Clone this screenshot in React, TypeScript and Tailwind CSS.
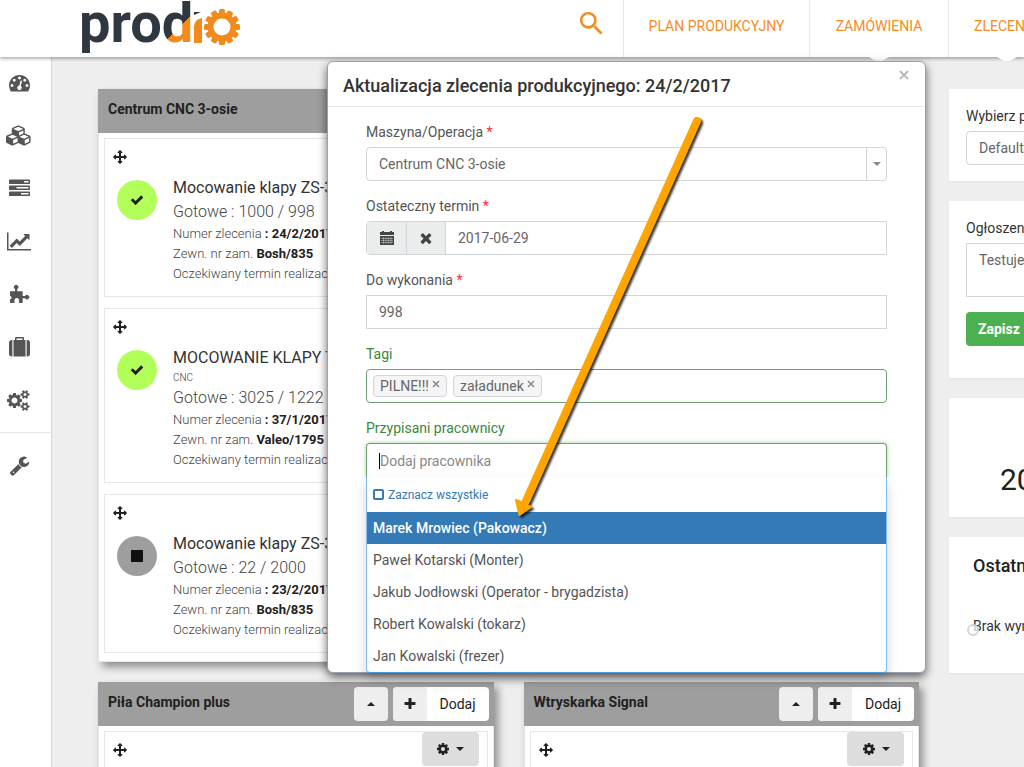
import React from "react";
import { MdSearch } from "react-icons/md";

type IconProps = { d: string; className?: string; viewBox?: string };

const Icon = ({ d, className, viewBox = "0 0 1792 1792" }: IconProps) => (
  <svg viewBox={viewBox} className={className} fill="currentColor" aria-hidden="true">
    <path d={d} />
  </svg>
);

const icons = {
  dashboard:
    "M384 1152q0-53-37.5-90.5t-90.5-37.5-90.5 37.5-37.5 90.5 37.5 90.5 90.5 37.5 90.5-37.5 37.5-90.5zm192-448q0-53-37.5-90.5t-90.5-37.5-90.5 37.5-37.5 90.5 37.5 90.5 90.5 37.5 90.5-37.5 37.5-90.5zm428 481l101-382q6-26-7.5-48.5t-38.5-29.5-48 6.5-30 39.5l-101 382q-60 5-107 43.5t-63 98.5q-20 77 20 146t117 89 146-20 89-117q16-60-6-117t-72-91zm660-33q0-53-37.5-90.5t-90.5-37.5-90.5 37.5-37.5 90.5 37.5 90.5 90.5 37.5 90.5-37.5 37.5-90.5zm-640-640q0-53-37.5-90.5t-90.5-37.5-90.5 37.5-37.5 90.5 37.5 90.5 90.5 37.5 90.5-37.5 37.5-90.5zm448 192q0-53-37.5-90.5t-90.5-37.5-90.5 37.5-37.5 90.5 37.5 90.5 90.5 37.5 90.5-37.5 37.5-90.5zm320 448q0 261-141 483-19 29-54 29h-1402q-35 0-54-29-141-221-141-483 0-182 71-348t191-286 286-191 348-71 348 71 286 191 191 286 71 348z",
  cubes:
    "M640 1632l384-192v-314l-384 164v342zm-64-454l404-173-404-173-404 173zm1088 454l384-192v-314l-384 164v342zm-64-454l404-173-404-173-404 173zm-448-293l384-165v-266l-384 164v267zm-64-379l441-189-441-189-441 189zm1088 518v416q0 36-19 67t-52 47l-448 224q-25 14-57 14t-57-14l-448-224q-4-2-7-4-2 2-7 4l-448 224q-25 14-57 14t-57-14l-448-224q-33-16-52-47t-19-67v-416q0-38 21.5-70t56.5-48l434-186v-400q0-38 21.5-70t56.5-48l448-192q23-10 50-10t50 10l448 192q35 16 56.5 48t21.5 70v400l434 186q36 16 57 48t21 70z",
  tasks:
    "M1024 1408h640v-128h-640v128zm-384-512h1024v-128h-1024v128zm640-512h384v-128h-384v128zm512 832v256q0 26-19 45t-45 19h-1664q-26 0-45-19t-19-45v-256q0-26 19-45t45-19h1664q26 0 45 19t19 45zm0-512v256q0 26-19 45t-45 19h-1664q-26 0-45-19t-19-45v-256q0-26 19-45t45-19h1664q26 0 45 19t19 45zm0-512v256q0 26-19 45t-45 19h-1664q-26 0-45-19t-19-45v-256q0-26 19-45t45-19h1664q26 0 45 19t19 45z",
  chart:
    "M2048 1536v128h-2048v-1536h128v1408h1920zm-128-1248v435q0 21-19.5 29.5t-35.5-7.5l-121-121-633 633q-10 10-23 10t-23-10l-233-233-416 416-192-192 585-585q10-10 23-10t23 10l233 233 464-464-121-121q-16-16-7.5-35.5t29.5-19.5h435q14 0 23 9t9 23z",
  puzzle:
    "M1 7h4.800v-2.200a2.100 2.100 0 1 1 2 0v2.200h5.200v4.500h2.300a2.100 2.100 0 1 1 0 2h-2.300v4.500h-3.400v-2.500a2.200 2.200 0 0 0-4.400 0v2.500h-4.200v-3.500a1.500 1.500 0 0 0 0-3z",
  suitcase:
    "M640 256h512v-128h-512v128zm-352 0v1408h-64q-92 0-158-66t-66-158v-960q0-92 66-158t158-66h64zm1120 0v1408h-1024v-1408h128v-160q0-40 28-68t68-28h576q40 0 68 28t28 68v160h128zm384 224v960q0 92-66 158t-158 66h-64v-1408h64q92 0 158 66t66 158z",
  cogs: "M832 896q0-106-75-181t-181-75-181 75-75 181 75 181 181 75 181-75 75-181zm768 512q0-52-38-90t-90-38-90 38-38 90q0 53 37.5 90.5t90.5 37.5 90.5-37.5 37.5-90.5zm0-1024q0-52-38-90t-90-38-90 38-38 90q0 53 37.5 90.5t90.5 37.5 90.5-37.5 37.5-90.5zm-384 421v185q0 10-7 19.5t-16 10.5l-155 24q-11 35-32 76 34 48 90 115 7 11 7 20 0 12-7 19-23 30-82.5 89.500t-78.500 59.500q-11 0-21-7l-115-90q-37 19-77 31-11 108-23 155-7 24-30 24h-186q-11 0-20-7.500t-10-17.500l-23-153q-34-10-75-31l-118 89q-7 7-20 7-11 0-21-8-144-133-144-160 0-9 7-19 10-14 41-53t47-61q-23-44-35-82l-152-24q-10-1-17-9.500t-7-19.500v-185q0-10 7-19.500t16-10.500l155-24q11-35 32-76-34-48-90-115-7-11-7-20 0-12 7-20 22-30 82-89t79-59q11 0 21 7l115 90q34-18 77-32 11-108 23-154 7-24 30-24h186q11 0 20 7.500t10 17.500l23 153q34 10 75 31l118-89q8-7 20-7 11 0 21 8 144 133 144 160 0 8-7 19-12 16-42 54t-45 60q23 48 34 82l152 23q10 2 17 10.500t7 19.500zm640 533v140q0 16-149 31-12 27-30 52 51 113 51 138 0 4-4 7-122 71-124 71-8 0-46-47t-52-68q-20 2-30 2t-30-2q-14 21-52 68t-46 47q-2 0-124-71-4-3-4-7 0-25 51-138-18-25-30-52-149-15-149-31v-140q0-16 149-31 13-29 30-52-51-113-51-138 0-4 4-7 4-2 35-20t59-34 30-16q8 0 46 46.500t52 67.500q20-2 30-2t30 2q51-71 92-112l6-2q4 0 124 70 4 3 4 7 0 25-51 138 17 23 30 52 149 15 149 31zm0-1024v140q0 16-149 31-12 27-30 52 51 113 51 138 0 4-4 7-122 71-124 71-8 0-46-47t-52-68q-20 2-30 2t-30-2q-14 21-52 68t-46 47q-2 0-124-71-4-3-4-7 0-25 51-138-18-25-30-52-149-15-149-31v-140q0-16 149-31 13-29 30-52-51-113-51-138 0-4 4-7 4-2 35-20t59-34 30-16q8 0 46 46.500t52 67.500q20-2 30-2t30 2q51-71 92-112l6-2q4 0 124 70 4 3 4 7 0 25-51 138 17 23 30 52 149 15 149 31z",
  wrench:
    "M448 1472q0-26-19-45t-45-19-45 19-19 45 19 45 45 19 45-19 19-45zm644-420l-682 682q-37 37-90 37-52 0-91-37l-106-108q-38-36-38-90 0-53 38-91l681-681q39 98 114.500 173.500t173.500 114.500zm634-435q0 39-23 106-47 134-164.500 217.500t-258.500 83.500q-185 0-316.500-131.500t-131.500-316.500 131.500-316.500 316.500-131.500q58 0 121.500 16.500t107.500 46.500q16 11 16 28t-16 28l-293 169v224l193 107q5-3 79-48.500t135.500-81 70.500-35.500q15 0 23.500 10t8.500 25z",
  arrows:
    "M1792 896q0 26-19 45l-256 256q-19 19-45 19t-45-19-19-45v-128h-384v384h128q26 0 45 19t19 45-19 45l-256 256q-19 19-45 19t-45-19l-256-256q-19-19-19-45t19-45 45-19h128v-384h-384v128q0 26-19 45t-45 19-45-19l-256-256q-19-19-19-45t19-45l256-256q19-19 45-19t45 19 19 45v128h384v-384h-128q-26 0-45-19t-19-45 19-45l256-256q19-19 45-19t45 19l256 256q19 19 19 45t-19 45-45 19h-128v384h384v-128q0-26 19-45t45-19 45 19l256 256q19 19 19 45z",
  check:
    "M1671 566q0 40-28 68l-724 724-136 136q-28 28-68 28t-68-28l-136-136-362-362q-28-28-28-68t28-68l136-136q28-28 68-28t68 28l294 295 656-657q28-28 68-28t68 28l136 136q28 28 28 68z",
  times:
    "M1490 1322q0 40-28 68l-136 136q-28 28-68 28t-68-28l-294-294-294 294q-28 28-68 28t-68-28l-136-136q-28-28-28-68t28-68l294-294-294-294q-28-28-28-68t28-68l136-136q28-28 68-28t68 28l294 294 294-294q28-28 68-28t68 28l136 136q28 28 28 68t-28 68l-294 294 294 294q28 28 28 68z",
  plus: "M1600 736v192q0 40-28 68t-68 28h-416v416q0 40-28 68t-68 28h-192q-40 0-68-28t-28-68v-416h-416q-40 0-68-28t-28-68v-192q0-40 28-68t68-28h416v-416q0-40 28-68t68-28h192q40 0 68 28t28 68v416h416q40 0 68 28t28 68z",
  cog: "M1152 896q0-106-75-181t-181-75-181 75-75 181 75 181 181 75 181-75 75-181zm512-109v222q0 12-8 23t-20 13l-185 28q-19 54-39 91 35 50 107 138 10 12 10 25t-9 23q-27 37-99 108t-94 71q-12 0-26-9l-138-108q-44 23-91 38-16 136-29 186-7 28-36 28h-222q-14 0-24.500-8.500t-11.500-21.500l-28-184q-49-16-90-37l-141 107q-10 9-25 9-14 0-25-11-126-114-165-168-7-10-7-23 0-12 8-23 15-21 51-66.500t54-70.500q-27-50-41-99l-183-27q-13-2-21-12.500t-8-23.500v-222q0-12 8-23t19-13l186-28q14-46 39-92-40-57-107-138-10-12-10-24 0-10 9-23 26-36 98.500-107.500t94.500-71.500q13 0 26 10l138 107q44-23 91-38 16-136 29-186 7-28 36-28h222q14 0 24.500 8.500t11.500 21.500l28 184q49 16 90 37l142-107q9-9 24-9 13 0 25 10 129 119 165 170 7 8 7 22 0 12-8 23-15 21-51 66.500t-54 70.500q26 50 41 98l183 28q13 2 21 12.500t8 23.500z",
  caretDown: "M0 0h8l-4 4z",
  caretUp: "M0 4h8l-4-4z",
};

const menu = [
  { name: "Pulpit", d: icons.dashboard, viewBox: "0 0 1792 1792", size: "h-[21px] w-[21px]" },
  { name: "Produkty", d: icons.cubes, viewBox: "0 0 2304 1792", size: "h-[21px] w-[26px]" },
  { name: "Zadania", d: icons.tasks, viewBox: "0 0 1792 1792", size: "h-[21px] w-[21px]" },
  { name: "Raporty", d: icons.chart, viewBox: "0 0 2048 1792", size: "h-[21px] w-[24px]" },
  { name: "Moduły", d: icons.puzzle, viewBox: "0 0 20 20", size: "h-[21px] w-[21px]" },
  { name: "Magazyn", d: icons.suitcase, viewBox: "0 0 1792 1792", size: "h-[21px] w-[21px]" },
  { name: "Ustawienia", d: icons.cogs, viewBox: "0 0 1920 1792", size: "h-[21px] w-[24px]" },
];

const orders = [
  { title: "Mocowanie klapy ZS-345", sub: "", done: "1000 / 998", number: "24/2/2017", ext: "Bosh/835", ready: true },
  { title: "MOCOWANIE KLAPY TYLNEJ", sub: "CNC", done: "3025 / 1222", number: "37/1/2017", ext: "Valeo/1795", ready: true },
  { title: "Mocowanie klapy ZS-345", sub: "", done: "22 / 2000", number: "23/2/2017", ext: "Bosh/835", ready: false },
];

const workers = [
  "Marek Mrowiec (Pakowacz)",
  "Paweł Kotarski (Monter)",
  "Jakub Jodłowski (Operator - brygadzista)",
  "Robert Kowalski (tokarz)",
  "Jan Kowalski (frezer)",
];

const teeth = [0, 30, 60, 90, 120, 150, 180, 210, 240, 270, 300, 330];

const Logo = () => (
  <a href="#" aria-label="prodio" className="flex items-start text-[56px] leading-[46px] font-bold text-[#2f3840]">
    <span>pro</span>
    <span className="bg-[linear-gradient(135deg,#2f3840_58%,#f28a1c_58%)] bg-clip-text text-transparent">d</span>
    <svg viewBox="0 0 48 46" className="mt-1 h-[46px] w-[48px]" aria-hidden="true">
      <path d="M1 11V8h7z" fill="#2f3840" />
      <path d="M1 39V22q1-7 8-8v25z" fill="#f28a1c" />
      <g fill="#f28a1c">
        {teeth.map((a) => (
          <rect key={a} x="26" y="5" width="6" height="7" rx="1.500" transform={`rotate(${a} 29 23)`} />
        ))}
      </g>
      <circle cx="29" cy="23" r="11.500" fill="none" stroke="#f28a1c" strokeWidth="6" />
    </svg>
  </a>
);

const Header = () => (
  <header className="relative z-10 flex h-[57px] shrink-0 justify-between bg-white shadow-[0_2px_3px_rgba(0,0,0,0.3)]">
    <div className="pl-[79px]">
      <Logo />
    </div>
    <nav className="-mr-[61px] flex shrink-0 text-sm whitespace-nowrap text-[#f68b1f]">
      <button aria-label="Szukaj" className="flex w-16 items-start justify-center pt-2">
        <MdSearch size={31} />
      </button>
      <a href="#" className="flex w-[186px] items-center justify-center border-l border-gray-200 pb-1.5">
        PLAN PRODUKCYJNY
      </a>
      <a href="#" className="relative flex w-[139px] items-center justify-center border-l border-gray-200 pb-1.5">
        ZAMÓWIENIA
        <Icon d="M0 0h20l-7 4h-6z" viewBox="0 0 20 4" className="absolute top-full h-1 w-5 text-white" />
      </a>
      <a href="#" className="relative flex w-[137px] items-center border-l border-gray-200 pb-1.5 pl-[25px]">
        ZLECENIA
        <Icon d="M0 0h20l-7 4h-6z" viewBox="0 0 20 4" className="absolute top-full left-12 h-1 w-5 text-white" />
      </a>
    </nav>
  </header>
);

const Sidebar = () => (
  <aside className="w-[52px] shrink-0 border-r border-gray-300 bg-white text-[#555]">
    <ul className="flex flex-col border-b border-gray-200 pb-1">
      {menu.map((item) => (
        <li key={item.name}>
          <a href="#" aria-label={item.name} className="flex h-[53px] w-[38px] items-center justify-center pb-0.5">
            <Icon d={item.d} viewBox={item.viewBox} className={`shrink-0 ${item.size}`} />
          </a>
        </li>
      ))}
    </ul>
    <a href="#" aria-label="Narzędzia" className="flex h-16 w-[38px] items-center justify-center">
      <Icon d={icons.wrench} className="h-[21px] w-[21px]" />
    </a>
  </aside>
);

const Panel = ({ title, actions, children }: { title: string; actions?: boolean; children: React.ReactNode }) => (
  <section className="border border-gray-200 bg-white shadow-[4px_5px_8px_rgba(0,0,0,0.4)]">
    <div className="-mx-px -mt-px flex h-11 items-center justify-between bg-[#9e9e9e] pr-[5px] pl-2.5 text-[#212121]">
      <h2 className="pb-1 text-sm font-bold">{title}</h2>
      {actions && (
        <div className="flex gap-[5px] text-sm">
          <button aria-label="Zwiń" className="flex h-[34px] w-[34px] items-center justify-center rounded-sm bg-[#eee]">
            <Icon d={icons.caretUp} viewBox="0 0 8 4" className="h-1 w-2" />
          </button>
          <button className="flex h-[34px] items-center overflow-hidden rounded-sm bg-white">
            <span className="flex h-full w-[34px] items-center justify-center bg-[#eee]">
              <Icon d={icons.plus} className="h-[14px] w-[14px]" />
            </span>
            <span className="w-[62px]">Dodaj</span>
          </button>
        </div>
      )}
    </div>
    <div className="flex flex-col gap-[11px] p-[5px] pb-2">{children}</div>
  </section>
);

const Order = ({ order }: { order: (typeof orders)[number] }) => (
  <article className="border border-gray-200 px-2 pt-[11px] pb-3 text-[#212121]">
    <Icon d={icons.arrows} className="h-[14px] w-[14px]" />
    <div className="mt-3 flex gap-4 pl-1">
      <span
        className={`mt-1 flex h-10 w-10 shrink-0 items-center justify-center rounded-full ${
          order.ready ? "bg-[#b2ff59]" : "bg-[#9e9e9e]"
        }`}
      >
        {order.ready ? <Icon d={icons.check} className="h-[14px] w-[14px]" /> : <span className="h-3 w-3 bg-[#111]" />}
      </span>
      <div className="text-[13px] leading-5 font-light whitespace-nowrap text-[#444]">
        <h3 className="text-base leading-6 font-normal text-[#333]">{order.title}</h3>
        {order.sub && <p className="text-[10px] leading-4">{order.sub}</p>}
        <p className="text-base leading-6">Gotowe : {order.done}</p>
        <p>
          Numer zlecenia <b className="font-bold text-[#212121]">: {order.number}</b>
        </p>
        <p>
          Zewn. nr zam. <b className="font-bold text-[#212121]">{order.ext}</b>
        </p>
        <p>Oczekiwany termin realizacji</p>
      </div>
    </div>
  </article>
);

const EmptyOrder = () => (
  <article className="flex h-40 items-start justify-between border border-gray-200 pr-2 pl-2 text-[#212121]">
    <Icon d={icons.arrows} className="mt-[11px] h-[14px] w-[14px]" />
    <button aria-label="Opcje" className="flex h-[34px] w-[57px] items-center justify-center gap-1.5 rounded-sm bg-[#ddd]">
      <Icon d={icons.cog} className="h-[14px] w-[14px]" />
      <Icon d={icons.caretDown} viewBox="0 0 8 4" className="h-1 w-2" />
    </button>
  </article>
);

const RightBar = () => (
  <aside className="-mr-[204px] flex w-[279px] shrink-0 flex-col gap-5 text-sm text-[#333]">
    <div className="bg-white px-[17px] pt-[17px] pb-4 shadow-xs">
      <label htmlFor="plan" className="mb-[5px] block leading-5">
        Wybierz plan
      </label>
      <select id="plan" className="h-[34px] w-full appearance-none rounded-sm border border-gray-300 px-3 text-[#666]">
        <option>Default</option>
      </select>
    </div>
    <div className="bg-white px-[17px] pt-[17px] pb-8 shadow-xs">
      <label htmlFor="note" className="mb-[5px] block leading-5">
        Ogłoszenie
      </label>
      <textarea
        id="note"
        defaultValue="Testujemy"
        className="block h-[54px] w-full resize-none border border-gray-300 px-3 py-1.5 text-[#666]"
      />
      <button className="mt-[15px] h-[34px] w-24 rounded-sm bg-[#4caf50] px-3 text-left font-bold text-white">Zapisz</button>
    </div>
    <div className="flex h-[119px] items-center bg-white pt-11 pl-[51px] text-[30px] leading-none text-[#212121] shadow-xs">
      2017
    </div>
    <div className="h-[136px] bg-white pt-[17px] pl-6 shadow-xs">
      <h2 className="text-lg leading-6 font-medium text-[#212121]">Ostatnie</h2>
      <p className="relative mt-[38px] leading-5">
        Brak wyników
        <span className="absolute top-2 -left-1.5 h-3 w-3 rounded-full border-2 border-gray-300 bg-white/70" />
      </p>
    </div>
  </aside>
);

const Label = ({ id, required, children }: { id: string; required?: boolean; children: string }) => (
  <label htmlFor={id} className={`mb-[5px] block leading-5 ${required ? "text-[#555]" : "text-[#3c863d]"}`}>
    {children} {required && <span className="text-red-500">*</span>}
  </label>
);

const Tag = ({ children }: { children: string }) => (
  <span className="flex h-[22px] items-center gap-[3px] rounded-sm border border-gray-300 bg-[#f5f5f5] px-1.5">
    {children}
    <button aria-label={`Usuń ${children}`} className="pb-1 text-[#888]">
      <svg viewBox="0 0 8 8" className="h-2 w-2" stroke="currentColor" strokeWidth="1.500">
        <path d="M1 1l6 6M7 1l-6 6" />
      </svg>
    </button>
  </span>
);

const Modal = () => (
  <div
    role="dialog"
    aria-labelledby="modal-title"
    className="absolute top-[61px] right-[98px] left-[327px] z-20 rounded-md border border-gray-400 bg-white text-sm text-[#666] shadow-[0_4px_10px_rgba(0,0,0,0.6)]"
  >
    <div className="flex h-[45px] items-start justify-between border-b border-gray-200 pr-3 pl-[15px]">
      <h1 id="modal-title" className="pt-3 text-lg leading-6 font-medium text-[#333]">
        Aktualizacja zlecenia produkcyjnego: 24/2/2017
      </h1>
      <button aria-label="Zamknij" className="mt-1 p-1 text-[#bbb]">
        <svg viewBox="0 0 10 10" className="h-2.5 w-2.5" stroke="currentColor" strokeWidth="2">
          <path d="M1 1l8 8M9 1l-8 8" />
        </svg>
      </button>
    </div>
    <form className="-mb-px flex flex-col gap-[15px] px-[38px] pt-[15px]">
      <div>
        <Label id="machine" required>
          Maszyna/Operacja
        </Label>
        <div className="flex h-[34px] rounded-sm border border-gray-300">
          <select id="machine" className="flex-1 appearance-none px-3">
            <option>Centrum CNC 3-osie</option>
          </select>
          <span className="flex w-5 items-center justify-center border-l border-gray-300 text-[#888]">
            <Icon d={icons.caretDown} viewBox="0 0 8 4" className="h-1 w-2" />
          </span>
        </div>
      </div>
      <div>
        <Label id="deadline" required>
          Ostateczny termin
        </Label>
        <div className="flex h-[34px] rounded-l-sm border border-gray-300 text-[#444]">
          <button type="button" aria-label="Kalendarz" className="flex w-10 items-center justify-center border-r border-gray-300 bg-[#ebeded]">
            <svg viewBox="0 0 14 14" className="h-[14px] w-[14px]">
              <path d="M0 1h2V0h2v1h6V0h2v1h2v3H0z" fill="currentColor" />
              <path d="M0 5h14v9H0z" fill="currentColor" />
              <path d="M1 7.500h12M1 9.500h12M1 11.500h12M3.500 6v7M6 6v7M8.500 6v7M11 6v7" stroke="#ebeded" strokeWidth=".4" />
            </svg>
          </button>
          <button type="button" aria-label="Wyczyść" className="flex w-[39px] items-center justify-center border-r border-gray-300 bg-[#ebeded]">
            <Icon d={icons.times} className="h-4 w-4" />
          </button>
          <input id="deadline" defaultValue="2017-06-29" className="min-w-0 flex-1 px-3 text-[#666]" />
        </div>
      </div>
      <div>
        <Label id="amount" required>
          Do wykonania
        </Label>
        <input id="amount" defaultValue="998" className="block h-[34px] w-full border border-gray-300 px-3" />
      </div>
      <div>
        <Label id="tags">Tagi</Label>
        <div className="flex h-[34px] items-center gap-1.5 rounded-sm border border-[#6fa070] px-1.5">
          <Tag>PILNE!!!</Tag>
          <Tag>załadunek</Tag>
          <input id="tags" className="min-w-0 flex-1 outline-none" />
        </div>
      </div>
      <div>
        <Label id="workers">Przypisani pracownicy</Label>
        <div className="flex h-[34px] items-center rounded-t-sm border border-b-0 border-[#6fa070] pl-3 shadow-[0_0_4px_rgba(103,177,104,0.6)]">
          <span className="h-4 w-px bg-black" />
          <input id="workers" placeholder="Dodaj pracownika" className="min-w-0 flex-1 outline-none placeholder:text-[#888]" />
        </div>
        <div className="relative rounded-b-sm border border-t-0 border-[#7ec0f5] border-b-[#4a9ad8] bg-white shadow-[0_6px_12px_rgba(0,0,0,0.18)]">
          <label className="flex h-[35px] items-center gap-1 pl-1.5 text-xs text-[#337ab7]">
            <input type="checkbox" className="h-[11px] w-[11px] appearance-none rounded-xs border-2 border-[#337ab7]" />
            Zaznacz wszystkie
          </label>
          <ul role="listbox" className="text-[#555]">
            {workers.map((worker, i) => (
              <li
                key={worker}
                role="option"
                aria-selected={i === 0}
                className={`flex h-8 items-center px-1.5 ${i === 0 ? "bg-[#337ab7] font-medium text-white" : ""}`}
              >
                {worker}
              </li>
            ))}
          </ul>
        </div>
      </div>
    </form>
  </div>
);

const Pointer = () => (
  <svg
    viewBox="0 0 210 420"
    className="pointer-events-none absolute top-[110px] left-[507px] z-30 h-[420px] w-[210px] drop-shadow-[2px_2px_1px_rgba(0,0,0,0.8)]"
    aria-hidden="true"
  >
    <path d="M190 11L19 391" stroke="#ffa500" strokeWidth="8" strokeLinecap="round" />
    <path d="M12.500 405L9 390l15 7z" fill="#ffa500" stroke="#ffa500" strokeLinejoin="round" strokeWidth="2" />
  </svg>
);

const App = () => {
  return (
    <div className="relative flex h-screen flex-col overflow-hidden bg-[#eee] font-['Roboto',sans-serif]">
      <Header />
      <div className="flex min-h-0 flex-1">
        <Sidebar />
        <div className="flex flex-1 gap-[30px] pt-8 pl-[46px]">
          <main className="grid flex-1 grid-cols-2 content-start gap-x-[30px] gap-y-5">
            <div className="col-start-1">
              <Panel title="Centrum CNC 3-osie">
                {orders.map((order) => (
                  <Order key={order.number} order={order} />
                ))}
              </Panel>
            </div>
            <div className="col-start-1">
              <Panel title="Piła Champion plus" actions>
                <EmptyOrder />
              </Panel>
            </div>
            <Panel title="Wtryskarka Signal" actions>
              <EmptyOrder />
            </Panel>
          </main>
          <RightBar />
        </div>
      </div>
      <Modal />
      <Pointer />
    </div>
  );
};

export default App;
